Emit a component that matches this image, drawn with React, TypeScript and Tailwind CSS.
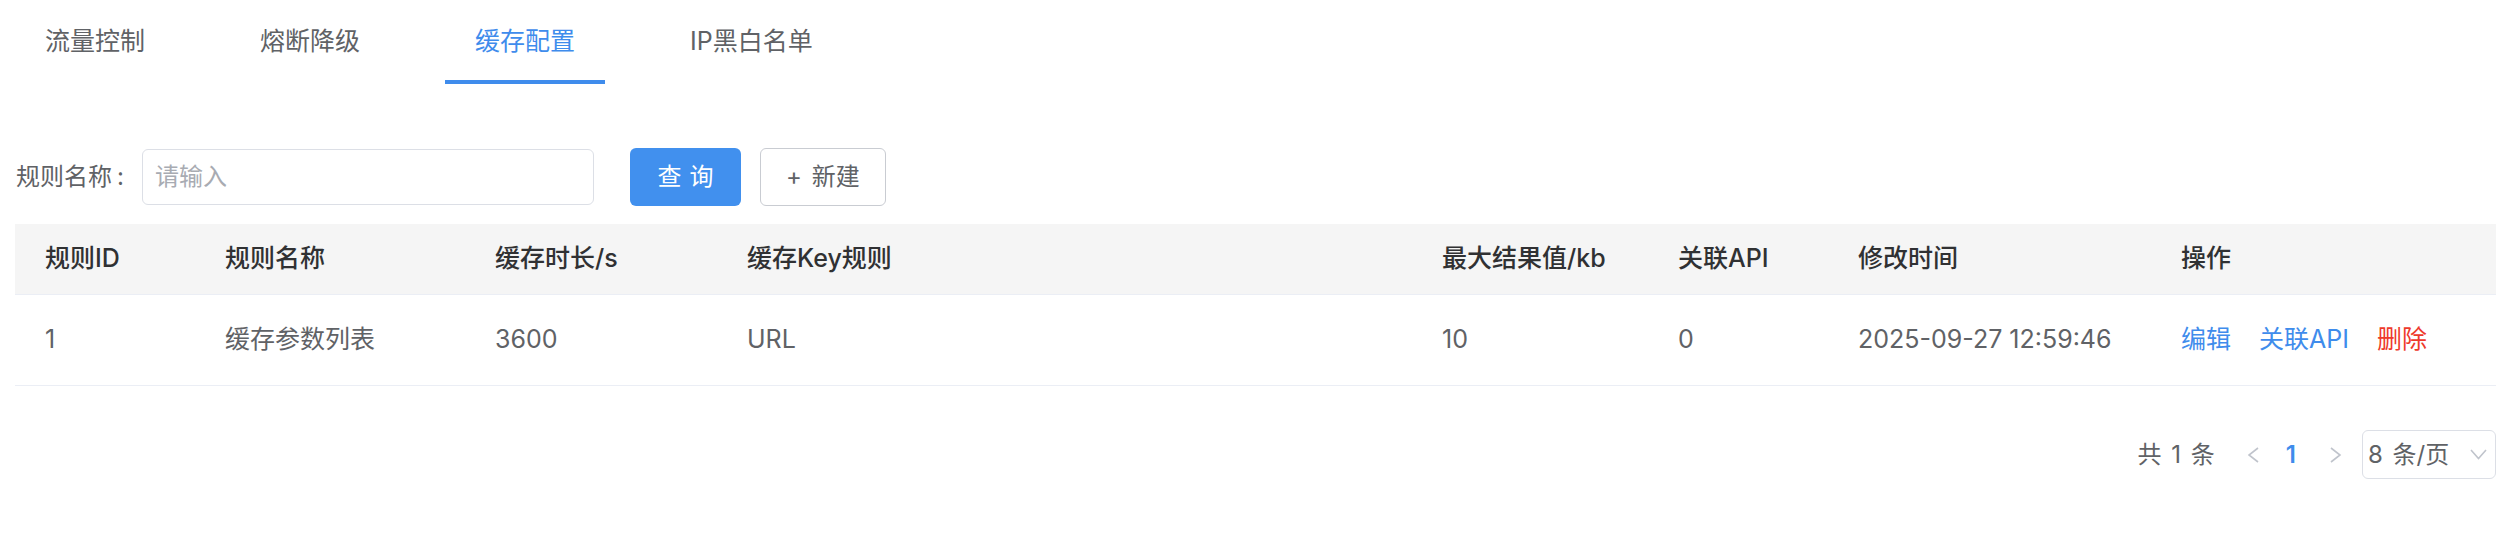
import React from 'react';

interface CacheRule {
  id: number;
  name: string;
  ttl: number;
  keyRule: string;
  maxSize: number;
  apiCount: number;
  updatedAt: string;
}

const tabs = ['流量控制', '熔断降级', '缓存配置', 'IP黑白名单'];

const columns = [
  { title: '规则ID', width: 'w-[180px]' },
  { title: '规则名称', width: 'w-[270px]' },
  { title: '缓存时长/s', width: 'w-[252px]' },
  { title: '缓存Key规则', width: 'w-[695px]' },
  { title: '最大结果值/kb', width: 'w-[236px]' },
  { title: '关联API', width: 'w-[180px]' },
  { title: '修改时间', width: 'w-[323px]' },
  { title: '操作', width: 'flex-1' },
];

const rules: CacheRule[] = [
  {
    id: 1,
    name: '缓存参数列表',
    ttl: 3600,
    keyRule: 'URL',
    maxSize: 10,
    apiCount: 0,
    updatedAt: '2025-09-27 12:59:46',
  },
];

function Chevron({ dir }: { dir: 'left' | 'right' | 'down' }) {
  if (dir === 'down') {
    return (
      <svg width="17" height="11" viewBox="0 0 17 11" fill="none">
        <polyline points="1,1 8.5,9.5 16,1" stroke="#c0c4cc" strokeWidth="1.6" />
      </svg>
    );
  }
  return (
    <svg width="12" height="16" viewBox="0 0 12 16" fill="none">
      <polyline
        points={dir === 'left' ? '11,1 2,8 11,15' : '1,1 10,8 1,15'}
        stroke="#c0c4cc"
        strokeWidth="1.6"
      />
    </svg>
  );
}

export default function App() {
  const active = 2;

  return (
    <div className="w-[2496px] h-[558px] overflow-hidden bg-white font-['Inter','Noto_Sans_CJK_SC',sans-serif] text-[#606266]">
      {/* tabs */}
      <div className="flex gap-[55px] pl-[15px] h-[84px]">
        {tabs.map((t, i) => (
          <div
            key={t}
            className={`px-[30px] pt-[24px] text-[25px] leading-[34px] border-b-4 box-border h-[84px] ${
              i === active ? 'text-[#3f8cec] border-[#3f8cec]' : 'text-[#606266] border-transparent'
            }`}
          >
            {t}
          </div>
        ))}
      </div>

      {/* search */}
      <div className="flex items-center mt-[64px] h-[58px] pl-[16px]">
        <span className="text-[24px] text-[#606266]">
          规则名称<span className="ml-[5px]">:</span>
        </span>
        <div className="ml-[18px] w-[452px] h-[56px] border border-[#dcdfe6] rounded-[6px] flex items-center pl-[12px]">
          <input
            className="w-full outline-none text-[24px] placeholder:text-[#a8abb2] bg-transparent"
            placeholder="请输入"
          />
        </div>
        <button className="ml-[36px] w-[111px] h-[58px] rounded-[6px] bg-[#4190ee] text-white text-[24px] tracking-[8px] pl-[8px]">
          查询
        </button>
        <button className="ml-[19px] w-[126px] h-[58px] rounded-[6px] border border-[#c9ccd2] text-[#606266] text-[24px] [word-spacing:3px]">
          + 新建
        </button>
      </div>

      {/* table */}
      <div className="ml-[15px] mt-[18px]">
        <div className="flex h-[71px] bg-[#f5f5f5] border-b border-[#ebeef5]">
          {columns.map((c) => (
            <div
              key={c.title}
              className={`${c.width} pl-[30px] flex items-center text-[25px] font-medium text-[#303133]`}
            >
              {c.title}
            </div>
          ))}
        </div>
        {rules.map((r) => (
          <div key={r.id} className="flex h-[91px] border-b border-[#ebeef5] text-[25px] text-[#606266]">
            <div className="w-[180px] pl-[30px] flex items-center">{r.id}</div>
            <div className="w-[270px] pl-[30px] flex items-center">{r.name}</div>
            <div className="w-[252px] pl-[30px] flex items-center">{r.ttl}</div>
            <div className="w-[695px] pl-[30px] flex items-center">{r.keyRule}</div>
            <div className="w-[236px] pl-[30px] flex items-center">{r.maxSize}</div>
            <div className="w-[180px] pl-[30px] flex items-center">{r.apiCount}</div>
            <div className="w-[323px] pl-[30px] flex items-center">{r.updatedAt}</div>
            <div className="flex-1 pl-[30px] flex items-center gap-[28px]">
              <span className="text-[#3f8cec]">编辑</span>
              <span className="text-[#3f8cec]">关联API</span>
              <span className="text-[#ee3a2c]">删除</span>
            </div>
          </div>
        ))}
      </div>

      {/* pagination */}
      <div className="flex justify-end items-center mt-[44px] h-[49px]">
        <span className="text-[24px] text-[#606266] mr-[32px] [word-spacing:3px]">共 1 条</span>
        <span className="mr-[27px]">
          <Chevron dir="left" />
        </span>
        <span className="text-[24px] font-semibold text-[#3f8cec] mr-[34px]">1</span>
        <span className="mr-[20px]">
          <Chevron dir="right" />
        </span>
        <div className="w-[134px] h-[49px] border border-[#dcdfe6] rounded-[6px] flex items-center justify-between pl-[5px] pr-[8px]">
          <span className="text-[24px] text-[#606266] [word-spacing:3px]">8 条/页</span>
          <Chevron dir="down" />
        </div>
      </div>
    </div>
  );
}
